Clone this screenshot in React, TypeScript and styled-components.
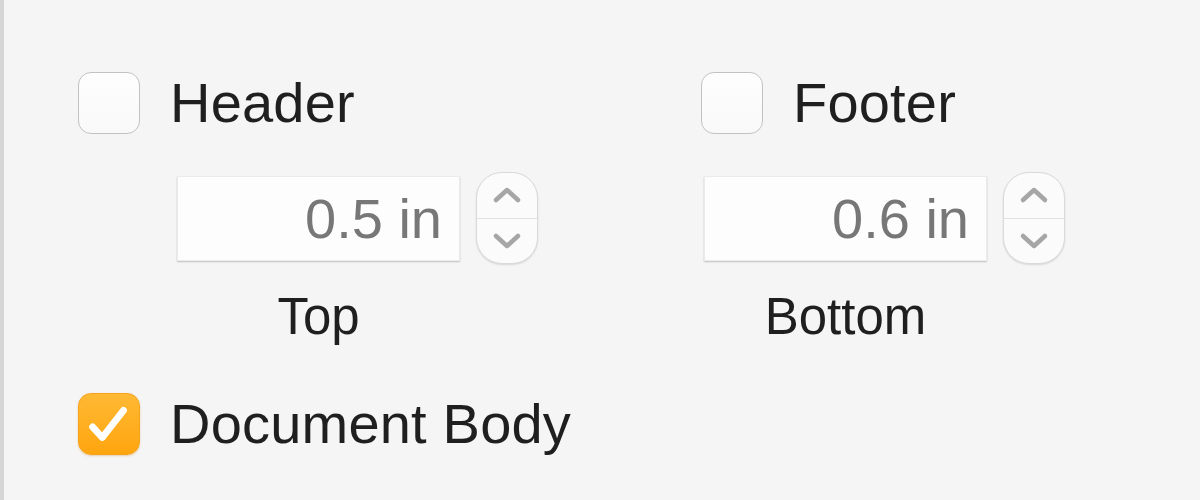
import React from 'react';
import styled, { createGlobalStyle } from 'styled-components';

const GlobalStyle = createGlobalStyle`
  html, body {
    margin: 0;
    padding: 0;
    background: #f5f5f5;
  }
  body {
    font-family: 'Liberation Sans', Arial, sans-serif;
    color: #1d1d1f;
  }
`;

const FIELDS = [
  { label: 'Top', value: '0.5 in' },
  { label: 'Bottom', value: '0.6 in' },
];

export default function App() {
  return (
    <>
      <GlobalStyle />
      <Panel>
        <CheckRow>
          <CheckItem $width={623}>
            <CheckBox />
            <CheckLabel>Header</CheckLabel>
          </CheckItem>
          <CheckItem>
            <CheckBox />
            <CheckLabel>Footer</CheckLabel>
          </CheckItem>
        </CheckRow>

        <FieldRow>
          {FIELDS.map((field) => (
            <FieldGroup key={field.label}>
              <FieldLine>
                <NumberInput>{field.value}</NumberInput>
                <Stepper>
                  <StepButton>
                    <svg width="32" height="20" viewBox="0 0 32 20" fill="none">
                      <path d="M5 15L16 5L27 15" stroke="#a6a6a6" strokeWidth="4.5" strokeLinecap="round" strokeLinejoin="round" />
                    </svg>
                  </StepButton>
                  <StepButton $bottom>
                    <svg width="32" height="20" viewBox="0 0 32 20" fill="none">
                      <path d="M5 5L16 15L27 5" stroke="#a6a6a6" strokeWidth="4.5" strokeLinecap="round" strokeLinejoin="round" />
                    </svg>
                  </StepButton>
                </Stepper>
              </FieldLine>
              <FieldLabel>{field.label}</FieldLabel>
            </FieldGroup>
          ))}
        </FieldRow>

        <BodyRow>
          <CheckItem>
            <CheckBox $checked>
              <svg width="62" height="62" viewBox="0 0 62 62" fill="none">
                <path d="M14 34L24 45L46 17" stroke="#ffffff" strokeWidth="7" strokeLinecap="round" strokeLinejoin="round" />
              </svg>
            </CheckBox>
            <CheckLabel>Document Body</CheckLabel>
          </CheckItem>
        </BodyRow>
      </Panel>
    </>
  );
}

const Panel = styled.div`
  box-sizing: border-box;
  height: 500px;
  padding: 72px 0 0 74px;
  border-left: 4px solid #d6d6d6;
`;

const CheckRow = styled.div`
  display: flex;
`;

const CheckItem = styled.div<{ $width?: number }>`
  display: flex;
  align-items: center;
  gap: 30px;
  flex-shrink: 0;
  width: ${(p) => (p.$width ? `${p.$width}px` : 'auto')};
`;

const CheckBox = styled.div<{ $checked?: boolean }>`
  box-sizing: border-box;
  width: 62px;
  height: 62px;
  border-radius: 13px;
  flex-shrink: 0;
  display: flex;
  align-items: center;
  justify-content: center;
  background: ${(p) =>
    p.$checked ? 'linear-gradient(180deg, #ffb934 0%, #ffa50f 100%)' : 'linear-gradient(180deg, #fdfdfd, #f9f9f9)'};
  border: ${(p) => (p.$checked ? '1px solid #f5a21c' : '1.5px solid #c2c2c2')};
  box-shadow: ${(p) => (p.$checked ? '0 1px 2px rgba(200, 120, 0, 0.3)' : 'inset 0 1px 1px rgba(255,255,255,0.8)')};

  svg {
    display: block;
  }
`;

const CheckLabel = styled.span`
  font-size: 56px;
  line-height: 62px;
  color: #1f1f1f;
  letter-spacing: 0.2px;
`;

const FieldRow = styled.div`
  display: flex;
  margin-top: 38px;
  padding-left: 99px;
`;

const FieldGroup = styled.div`
  display: flex;
  flex-direction: column;
  flex-shrink: 0;
  width: 527px;
`;

const FieldLine = styled.div`
  display: flex;
  align-items: center;
  gap: 16px;
`;

const NumberInput = styled.div`
  box-sizing: border-box;
  width: 283px;
  height: 85px;
  background: #fdfdfd;
  border: 1px solid #ebebeb;
  box-shadow: 0 1px 1.5px rgba(0, 0, 0, 0.22);
  font-size: 56px;
  line-height: 83px;
  color: #777777;
  text-align: right;
  padding-right: 17px;
`;

const Stepper = styled.div`
  box-sizing: border-box;
  width: 62px;
  height: 92px;
  border-radius: 26px;
  background: #fbfbfb;
  border: 1px solid #dadada;
  box-shadow: 0 1px 2px rgba(0, 0, 0, 0.12);
  display: flex;
  flex-direction: column;
  overflow: hidden;
`;

const StepButton = styled.div<{ $bottom?: boolean }>`
  flex: 1;
  display: flex;
  align-items: center;
  justify-content: center;
  border-top: ${(p) => (p.$bottom ? '1.5px solid #e2e2e2' : 'none')};
`;

const FieldLabel = styled.div`
  width: 283px;
  text-align: center;
  font-size: 51px;
  line-height: 60px;
  margin-top: 23px;
  color: #1f1f1f;
`;

const BodyRow = styled.div`
  margin-top: 46px;
`;
